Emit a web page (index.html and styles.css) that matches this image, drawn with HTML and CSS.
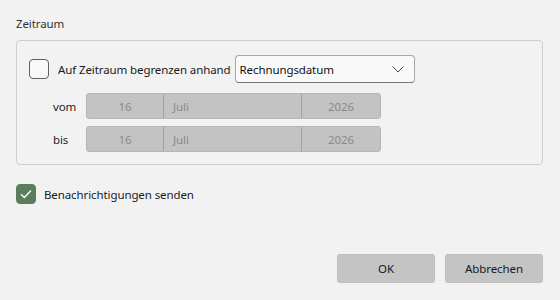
FILE: index.html
```html
<!DOCTYPE html>
<html lang="de">
<head>
    <meta charset="UTF-8">
    <title>Zeitraum</title>
    <link rel="stylesheet" href="styles.css">
</head>
<body>
    <div class="dialog">
        <div class="group-title">Zeitraum</div>
        <div class="group-box">
            <div class="limit-row">
                <span class="check"></span>
                <span class="check-label">Auf Zeitraum begrenzen anhand</span>
                <div class="select">
                    <span>Rechnungsdatum</span>
                    <svg class="chevron" width="12" height="7" viewBox="0 0 12 7">
                        <path d="M0.5 0.5 L6 6 L11.5 0.5" fill="none" stroke="#444" stroke-width="1"/>
                    </svg>
                </div>
            </div>
            <div class="date-row">
                <span class="date-label">vom</span>
                <div class="date-field">
                    <span class="day">16</span>
                    <span class="month">Juli</span>
                    <span class="year">2026</span>
                </div>
            </div>
            <div class="date-row">
                <span class="date-label">bis</span>
                <div class="date-field">
                    <span class="day">16</span>
                    <span class="month">Juli</span>
                    <span class="year">2026</span>
                </div>
            </div>
        </div>

        <div class="notify-row">
            <span class="check checked">
                <svg width="12" height="10" viewBox="0 0 12 10">
                    <path d="M1 5.2 L4.3 8.4 L11 1.6" fill="none" stroke="#fff" stroke-width="1.4"/>
                </svg>
            </span>
            <span class="check-label">Benachrichtigungen senden</span>
        </div>

        <div class="buttons">
            <button>OK</button>
            <button>Abbrechen</button>
        </div>
    </div>
</body>
</html>
```

FILE: styles.css
```css
* {
    margin: 0;
    padding: 0;
    box-sizing: border-box;
    font-family: "Noto Sans", sans-serif;
}

body {
    background: #f2f2f2;
    color: #1a1a1a;
    font-size: 11.5px;
    letter-spacing: -0.1px;
}

.dialog {
    width: 560px;
    height: 300px;
    padding: 16px 17px 17px 16px;
    display: flex;
    flex-direction: column;
}

.group-title {
    height: 24px;
    line-height: 16px;
    color: #333;
}

.group-box {
    border: 1px solid #cdcdcd;
    border-radius: 4px;
    padding: 14px 12px 12px 12px;
}

.limit-row {
    display: flex;
    align-items: center;
    height: 28px;
}

.check {
    width: 20px;
    height: 20px;
    border: 1px solid #5f5f5f;
    border-radius: 4px;
    background: #f8f8f8;
    display: flex;
    align-items: center;
    justify-content: center;
    flex-shrink: 0;
}

.check.checked {
    background: #5a7d5b;
    border-color: #5a7d5b;
}

.check-label {
    margin-left: 9px;
}

.select {
    margin-left: 4px;
    width: 180px;
    height: 28px;
    border: 1px solid #a8a8a8;
    border-bottom-color: #777;
    border-radius: 4px;
    background: #f9f9f9;
    display: flex;
    align-items: center;
    justify-content: space-between;
    padding: 0 10px 0 4px;
    color: #111;
}

.date-row {
    display: flex;
    align-items: center;
    margin-top: 10px;
}

.date-row + .date-row {
    margin-top: 7px;
}

.date-label {
    width: 57px;
    padding-left: 24px;
    color: #222;
}

.date-field {
    width: 295px;
    height: 26px;
    background: #c3c3c3;
    border: 1px solid #b6b6b6;
    border-radius: 3px;
    display: flex;
    color: #8a8a8a;
}

.date-field span {
    display: flex;
    align-items: center;
    height: 100%;
}

.date-field .day {
    width: 77px;
    justify-content: center;
    border-right: 1px solid #a2a2a2;
}

.date-field .month {
    width: 138px;
    padding-left: 9px;
    border-right: 1px solid #a2a2a2;
}

.date-field .year {
    flex: 1;
    justify-content: center;
}

.notify-row {
    display: flex;
    align-items: center;
    margin-top: 19px;
}

.notify-row .check-label {
    margin-left: 8px;
}

.buttons {
    margin-top: auto;
    display: flex;
    justify-content: flex-end;
    gap: 10px;
}

.buttons button {
    width: 98px;
    height: 29px;
    background: #c4c4c4;
    border: 1px solid #bdbdbd;
    border-radius: 3px;
    font-size: 11.5px;
    letter-spacing: -0.1px;
    color: #1a1a1a;
}
```
